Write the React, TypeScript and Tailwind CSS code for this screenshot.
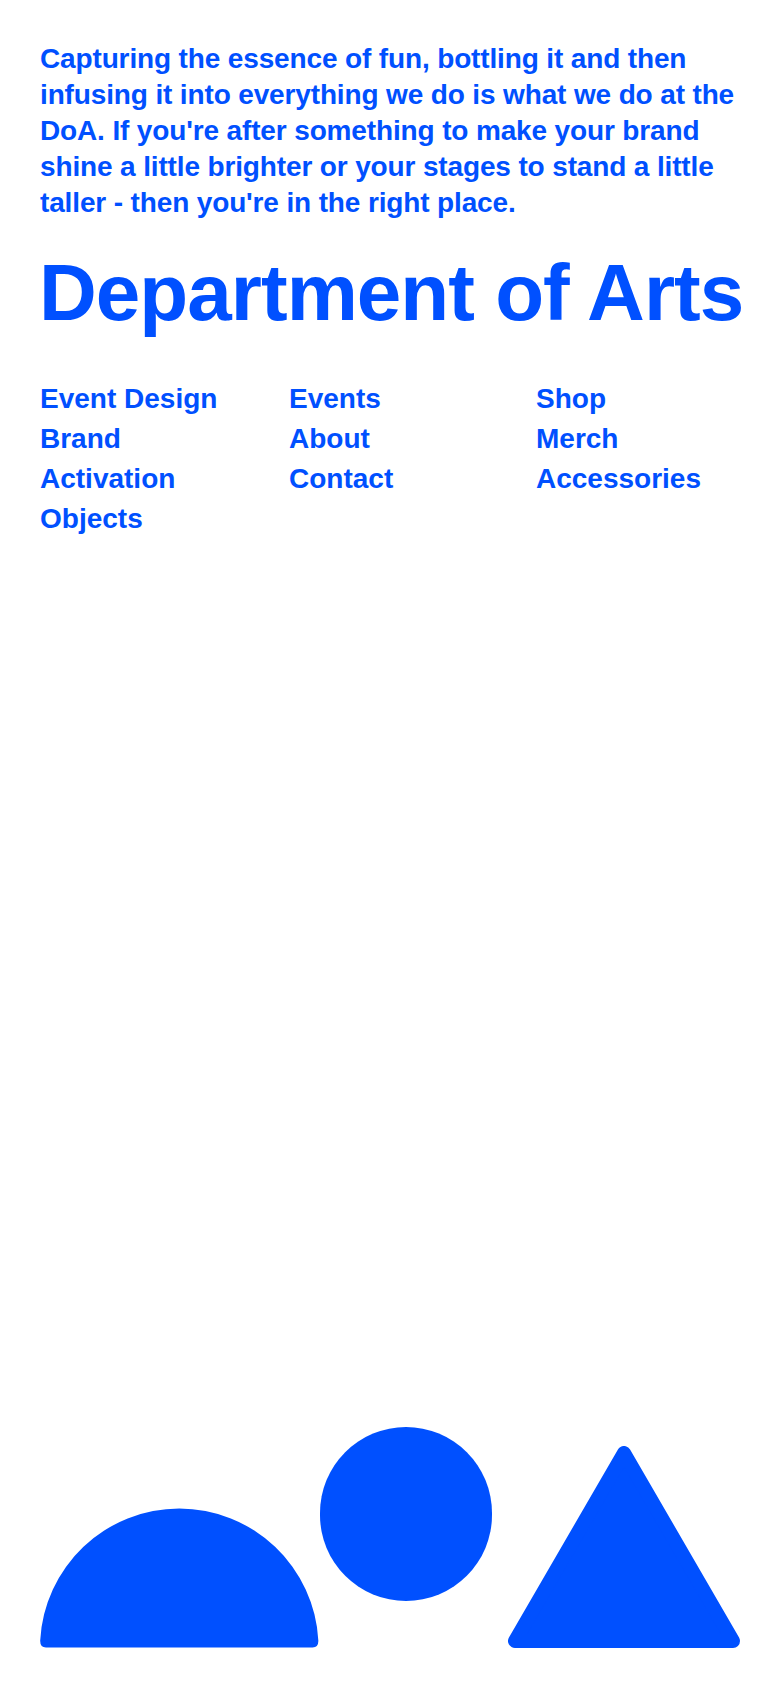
const columns = [
  ["Event Design", "Brand", "Activation", "Objects"],
  ["Events", "About", "Contact"],
  ["Shop", "Merch", "Accessories"],
];

function HalfCircle() {
  return (
    <svg width="281" height="141" viewBox="0 0 281 141" className="block">
      <path
        d="M0.2 134 A140.5 140.5 0 0 1 280.8 134 Q281 141 275 141 L6 141 Q0 141 0.2 134 Z"
        fill="#0050ff"
      />
    </svg>
  );
}

function Triangle() {
  return (
    <svg width="232" height="202" viewBox="0 0 232 202" className="block">
      <path
        d="M116 7 L7 195 L225 195 Z"
        fill="#0050ff"
        stroke="#0050ff"
        strokeWidth="14"
        strokeLinejoin="round"
      />
    </svg>
  );
}

export default function App() {
  return (
    <div className="flex min-h-screen flex-col bg-white px-10 pb-10 pt-[41px] text-[#0050ff] [font-family:'Liberation_Sans',Arial,sans-serif]">
      <p className="text-[28px] font-bold leading-[36px] tracking-[-0.005em]">
        Capturing the essence of fun, bottling it and then infusing it into
        everything we do is what we do at the DoA. If you're after something to
        make your brand shine a little brighter or your stages to stand a little
        taller - then you're in the right place.
      </p>

      <h1 className="-ml-px mt-8 whitespace-nowrap text-[80px] font-bold leading-none tracking-[-0.012em]">
        Department of Arts
      </h1>

      <nav className="mt-[46px] grid grid-cols-[249px_247px_1fr]">
        {columns.map((links, index) => (
          <ul key={index} className="flex flex-col">
            {links.map((link) => (
              <li key={link}>
                <a href="#" className="text-[28px] font-bold leading-[40px]">
                  {link}
                </a>
              </li>
            ))}
          </ul>
        ))}
      </nav>

      <div className="mt-auto flex items-end">
        <HalfCircle />
        <div className="mb-[47px] ml-px h-[174px] w-[174px] rounded-full bg-[#0050ff]" />
        <div className="ml-4">
          <Triangle />
        </div>
      </div>
    </div>
  );
}
